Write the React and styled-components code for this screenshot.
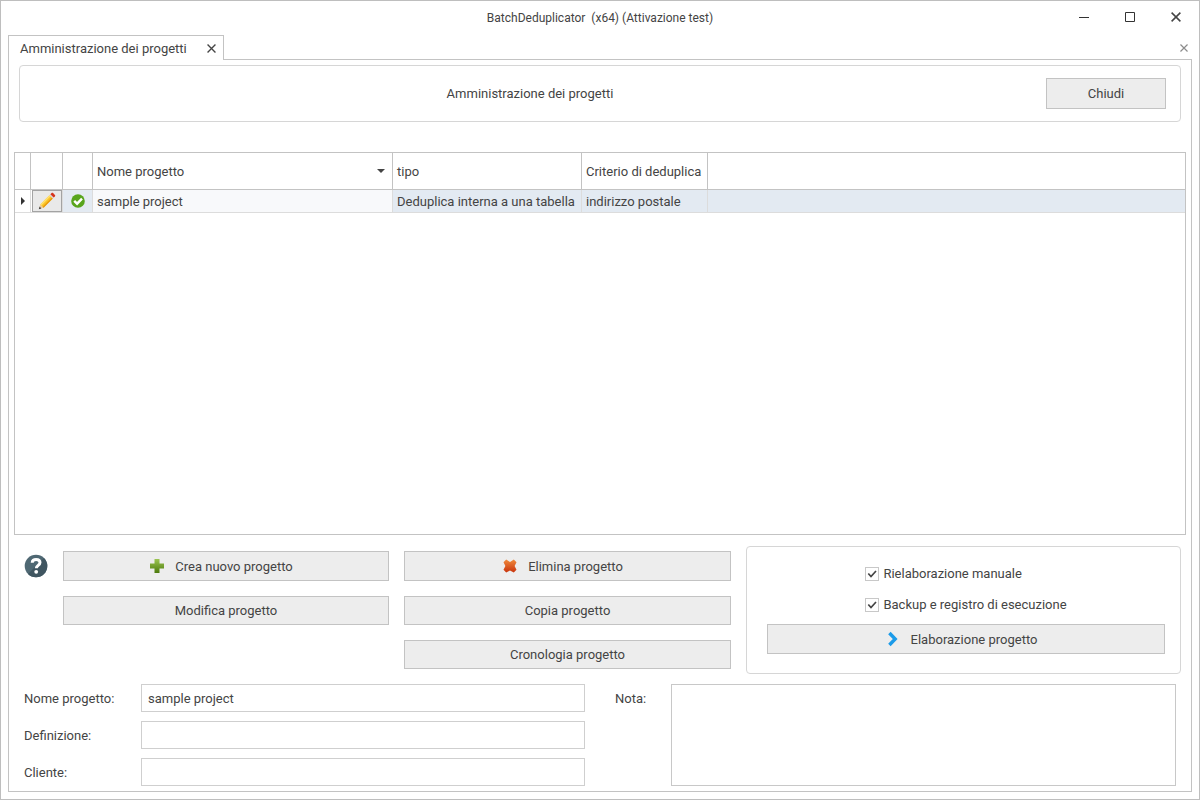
import React, { useState } from 'react'
import styled, { createGlobalStyle } from 'styled-components'

const GlobalStyle = createGlobalStyle`
*{
  box-sizing: border-box;
}
body{
  margin: 0;
  background: #fff;
}
body, button, input, textarea{
  font-family: Roboto, "Noto Sans", sans-serif;
  font-size: 13px;
  line-height: 19px;
  color: #444;
}
svg{
  display: block;
  flex: none;
}
`
const Window = styled.div`
min-height: 100vh;
display: flex;
flex-direction: column;
border: 1px solid #bebebe;
`
const TitleBar = styled.header`
height: 34px;
display: grid;
grid-template-columns: 1fr auto 1fr;
align-items: center;
h1{
  grid-column: 2;
  margin: 0;
  font-size: 12px;
  font-weight: 400;
  white-space: pre;
}
`
const WindowControls = styled.div`
align-self: start;
display: flex;
justify-content: flex-end;
`
const IconButton = styled.button`
width: ${(props) => props.$width || 12}px;
height: ${(props) => props.$height || 12}px;
padding: 0;
display: flex;
align-items: center;
justify-content: center;
border: none;
background: none;
color: ${(props) => props.$color || '#444'};
`
const TabStrip = styled.nav`
height: 24px;
padding: 0 9px 0 7px;
display: flex;
justify-content: space-between;
align-items: flex-start;
`
const Tab = styled.div`
position: relative;
height: 25px;
padding: 0 5px 0 11px;
display: flex;
align-items: center;
gap: 19px;
border: 1px solid #c3c3c3;
border-bottom: none;
background: #fff;
`
const StripEnd = styled.div`
height: 26px;
display: flex;
align-items: center;
`
const Panel = styled.main`
flex: 1;
margin: 0 7px 7px;
padding: 5px;
display: flex;
flex-direction: column;
border: 1px solid #c3c3c3;
`
const HeaderBox = styled.section`
height: 57px;
margin: 0 5px;
padding-right: 14px;
display: flex;
align-items: center;
gap: 6px;
border: 1px solid #d6d6d6;
border-radius: 4px;
h2{
  flex: 1;
  margin: 0;
  font-size: 13px;
  font-weight: 400;
  text-align: center;
}
`
const Button = styled.button`
width: ${(props) => props.$width || '100%'};
height: ${(props) => props.$height || 29}px;
padding: 0;
display: flex;
align-items: center;
justify-content: center;
border: 1px solid #c3c3c3;
background: #ededed;
span{
  padding: 0 10px;
}
`
const GridArea = styled.section`
flex: 1;
min-height: 383px;
margin-top: 30px;
border: 1px solid #c3c3c3;
`
const Table = styled.table`
width: 100%;
table-layout: fixed;
border-collapse: separate;
border-spacing: 0;
`
const Col = styled.col`
width: ${(props) => props.$width};
`
const HeadCell = styled.th`
height: 37px;
padding: 0 4px;
border-right: 1px solid #c3c3c3;
border-bottom: 1px solid #c3c3c3;
font-weight: 400;
text-align: left;
white-space: nowrap;
&:last-child{
  border-right: none;
}
div{
  display: flex;
  align-items: center;
  justify-content: space-between;
  padding-right: 3px;
}
`
const Cell = styled.td`
height: 23px;
padding: ${(props) => props.$padding || '0 4px'};
border-right: 1px solid #dcdcdc;
border-bottom: 1px solid #dcdcdc;
background: ${(props) => props.$background || '#e3eaf2'};
white-space: nowrap;
&:last-child{
  border-right: none;
}
svg{
  margin: 0 auto;
}
`
const EditButton = styled.button`
width: 30px;
height: 22px;
padding: 0;
display: flex;
align-items: center;
border: 1px solid #a3a3a3;
background: #e9e9e9;
`
const Actions = styled.section`
margin-top: 11px;
padding: 0 5px 0 10px;
display: grid;
grid-template-columns: 24px 326fr 327fr 435fr;
column-gap: 15px;
align-items: start;
`
const ActionColumn = styled.div`
padding-top: 5px;
display: flex;
flex-direction: column;
gap: 15px;
`
const RunBox = styled.div`
padding: 17px 15px 19px 20px;
display: flex;
flex-direction: column;
align-items: center;
gap: 10px;
border: 1px solid #d6d6d6;
border-radius: 4px;
`
const Options = styled.div`
display: flex;
flex-direction: column;
gap: 12px;
`
const Option = styled.label`
display: flex;
align-items: center;
gap: 4px;
`
const CheckWrap = styled.span`
position: relative;
width: 14px;
height: 14px;
input{
  appearance: none;
  display: block;
  width: 14px;
  height: 14px;
  margin: 0;
  border: 1px solid #c8c8c8;
  background: #fff;
}
svg{
  position: absolute;
  top: 0;
  left: 0;
  pointer-events: none;
}
`
const Details = styled.form`
margin-top: 10px;
padding: 0 10px;
display: grid;
grid-template-columns: 117px 444fr 30px 56px 505fr;
grid-template-rows: repeat(3, 28px);
row-gap: 9px;
`
const FieldLabel = styled.label`
grid-column: 1;
line-height: 29px;
`
const NoteLabel = styled(FieldLabel)`
grid-column: 4;
grid-row: 1;
`
const TextInput = styled.input`
grid-column: 2;
width: 100%;
height: 28px;
padding: 0 6px;
border: 1px solid #cfcfcf;
border-radius: 0;
background: #fff;
outline: none;
`
const NoteInput = styled.textarea`
grid-column: 5;
grid-row: 1 / 4;
width: 100%;
height: 100%;
padding: 4px 6px;
border: 1px solid #c8c8c8;
border-radius: 0;
outline: none;
resize: none;
`

const CloseIcon = ({ size = 10, weight = 1.5 }) => (
  <svg width={size} height={size} viewBox="0 0 10 10" fill="none" stroke="currentColor" strokeWidth={weight}>
    <path d="M.6.6l8.8 8.8M9.4.6L.6 9.4" />
  </svg>
)

const PencilIcon = () => (
  <svg width="20" height="20" viewBox="0 0 20 20">
    <path d="M2 18l1.300-4.600 3.300 3.300z" fill="#e9c9a0" />
    <path d="M1.800 18.200l.8-2.600 1.800 1.800z" fill="#444" />
    <path d="M3.300 13.400l9.200-9.200 3.300 3.300-9.200 9.200z" fill="#fbc424" />
    <path d="M3.300 13.400l9.200-9.200 1.100 1.100-9.200 9.200z" fill="#ffe070" />
    <path d="M5.600 15.700l9.200-9.200 1 1-9.200 9.200z" fill="#e89a12" />
    <path d="M12.500 4.200l1.100-1.100 3.300 3.300-1.100 1.100z" fill="#d9d4d8" />
    <path d="M13.400 3.300l1.200-1.200c.5-.5 1-.5 1.500 0l1.800 1.800c.5.5.5 1 0 1.500l-1.200 1.200z" fill="#d5341c" />
  </svg>
)

const StatusIcon = () => (
  <svg width="14" height="14" viewBox="0 0 14 14">
    <circle cx="7" cy="7" r="6.8" fill="#58a51d" />
    <path d="M3.200 6.800l2.900 2.900 4.900-5.100" fill="none" stroke="#fff" strokeWidth="2.400" />
  </svg>
)

const HelpIcon = () => (
  <svg width="24" height="24" viewBox="0 0 24 24">
    <circle cx="12" cy="12" r="11.300" fill="#4f6873" />
    <path d="M20 4A11.300 11.300 0 0 1 4 20z" fill="#3f5560" />
    <path d="M8.200 8.800c0-2.200 1.600-3.400 3.900-3.400s3.900 1.200 3.900 3.200c0 2.800-3.700 2.800-3.700 5.700" fill="none" stroke="#fff" strokeWidth="3" />
    <circle cx="12.200" cy="17.800" r="1.900" fill="#fff" />
  </svg>
)

const PlusIcon = () => (
  <svg width="16" height="16" viewBox="0 0 16 16">
    <defs>
      <linearGradient id="plus" x1="0" y1="0" x2="0" y2="1">
        <stop offset="0" stopColor="#9cc552" />
        <stop offset="1" stopColor="#4c7a0c" />
      </linearGradient>
    </defs>
    <path d="M5.500 1h5v4.500h4.500v5h-4.500V15h-5v-4.500H1v-5h4.500z" fill="url(#plus)" />
  </svg>
)

const DeleteIcon = () => (
  <svg width="16" height="16" viewBox="0 0 16 16">
    <defs>
      <linearGradient id="delete" x1="0" y1="0" x2="0" y2="1">
        <stop offset="0" stopColor="#f08a3c" />
        <stop offset="1" stopColor="#c8330c" />
      </linearGradient>
    </defs>
    <path d="M4.200 1.500L8 3.900l3.800-2.400 2.700 2.700L12.600 8l1.900 3.800-2.700 2.700L8 12.600l-3.800 1.900-2.700-2.700L3.400 8 1.500 4.200z" fill="url(#delete)" />
  </svg>
)

const RunIcon = () => (
  <svg width="16" height="16" viewBox="0 0 16 16">
    <path d="M4.400 2l5.800 6-5.800 6" fill="none" stroke="#1b9be9" strokeWidth="3.400" />
  </svg>
)

const CheckOption = ({ label }) => {
  const [checked, setChecked] = useState(true)

  return (
    <Option>
      <CheckWrap>
        <input type="checkbox" checked={checked} onChange={(e) => setChecked(e.target.checked)} />
        {checked && (
          <svg width="14" height="14" viewBox="0 0 14 14">
            <path d="M3.300 6.500l2.700 3 5-5.500" fill="none" stroke="#444" strokeWidth="1.700" />
          </svg>
        )}
      </CheckWrap>
      {label}
    </Option>
  )
}

const App = () => {
  const [name, setName] = useState('sample project')

  return (
    <>
      <GlobalStyle />
      <Window>
        <TitleBar>
          <h1>{'BatchDeduplicator  (x64) (Attivazione test)'}</h1>
          <WindowControls>
            <IconButton $width={46} $height={32}>
              <svg width="10" height="10"><path d="M0 5.500h10" stroke="#333" /></svg>
            </IconButton>
            <IconButton $width={46} $height={32}>
              <svg width="10" height="10"><path d="M.5.5h9v9h-9z" fill="none" stroke="#333" /></svg>
            </IconButton>
            <IconButton $width={46} $height={32}>
              <CloseIcon />
            </IconButton>
          </WindowControls>
        </TitleBar>

        <TabStrip>
          <Tab>
            Amministrazione dei progetti
            <IconButton>
              <CloseIcon size={9} />
            </IconButton>
          </Tab>
          <StripEnd>
            <IconButton $color="#8c8c8c">
              <CloseIcon size={8} />
            </IconButton>
          </StripEnd>
        </TabStrip>

        <Panel>
          <HeaderBox>
            <h2>Amministrazione dei progetti</h2>
            <Button $width="120px" $height={31}>Chiudi</Button>
          </HeaderBox>

          <GridArea>
            <Table>
              <colgroup>
                <Col $width="16px" />
                <Col $width="32px" />
                <Col $width="30px" />
                <Col $width="300px" />
                <Col $width="189px" />
                <Col $width="126px" />
                <Col $width="auto" />
              </colgroup>
              <thead>
                <tr>
                  <HeadCell />
                  <HeadCell />
                  <HeadCell />
                  <HeadCell>
                    <div>
                      Nome progetto
                      <svg width="8" height="4"><path d="M0 0h8L4 4z" fill="#444" /></svg>
                    </div>
                  </HeadCell>
                  <HeadCell>tipo</HeadCell>
                  <HeadCell>Criterio di deduplica</HeadCell>
                  <HeadCell />
                </tr>
              </thead>
              <tbody>
                <tr>
                  <Cell $padding="0" $background="#fff">
                    <svg width="4" height="8"><path d="M0 0l4 4-4 4z" fill="#333" /></svg>
                  </Cell>
                  <Cell $padding="0 0 0 1px" $background="#fff">
                    <EditButton>
                      <PencilIcon />
                    </EditButton>
                  </Cell>
                  <Cell $padding="0">
                    <StatusIcon />
                  </Cell>
                  <Cell $background="#f8f9fb">sample project</Cell>
                  <Cell>Deduplica interna a una tabella</Cell>
                  <Cell>indirizzo postale</Cell>
                  <Cell />
                </tr>
              </tbody>
            </Table>
          </GridArea>

          <Actions>
            <ActionColumn>
              <IconButton $width={24} $height={29}>
                <HelpIcon />
              </IconButton>
            </ActionColumn>
            <ActionColumn>
              <Button $height={30}>
                <PlusIcon />
                <span>Crea nuovo progetto</span>
              </Button>
              <Button>Modifica progetto</Button>
            </ActionColumn>
            <ActionColumn>
              <Button $height={30}>
                <DeleteIcon />
                <span>Elimina progetto</span>
              </Button>
              <Button>Copia progetto</Button>
              <Button>Cronologia progetto</Button>
            </ActionColumn>
            <RunBox>
              <Options>
                <CheckOption label="Rielaborazione manuale" />
                <CheckOption label="Backup e registro di esecuzione" />
              </Options>
              <Button $height={30}>
                <RunIcon />
                <span>Elaborazione progetto</span>
              </Button>
            </RunBox>
          </Actions>

          <Details>
            <FieldLabel htmlFor="name">Nome progetto:</FieldLabel>
            <TextInput id="name" value={name} onChange={(e) => setName(e.target.value)} />
            <FieldLabel htmlFor="definition">Definizione:</FieldLabel>
            <TextInput id="definition" />
            <FieldLabel htmlFor="client">Cliente:</FieldLabel>
            <TextInput id="client" />
            <NoteLabel htmlFor="note">Nota:</NoteLabel>
            <NoteInput id="note" />
          </Details>
        </Panel>
      </Window>
    </>
  )
}

export default App
